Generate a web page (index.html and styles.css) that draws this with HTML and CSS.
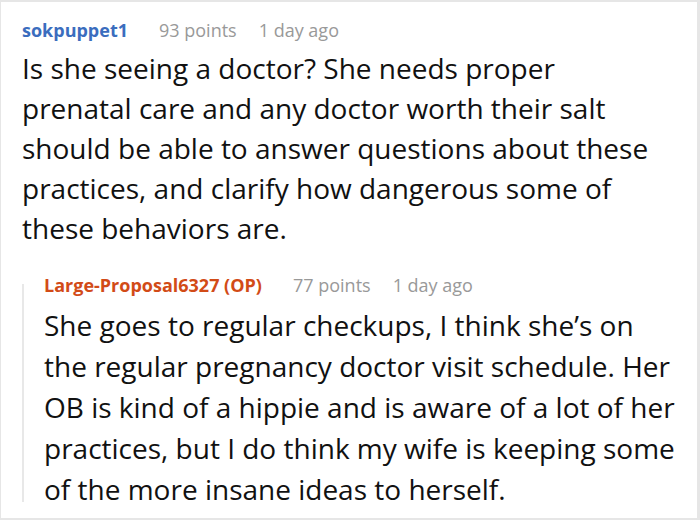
FILE: index.html
```html
<!DOCTYPE html>
<html>
<head>
<meta charset="utf-8">
<link rel="stylesheet" href="styles.css">
</head>
<body>
<div class="frame">
  <div class="comment">
    <div class="meta">
      <span class="user">sokpuppet1</span>
      <span class="points">93 points</span>
      <span class="time">1 day ago</span>
    </div>
    <p class="body">Is she seeing a doctor? She needs proper prenatal care and any doctor worth their salt should be able to answer questions about these practices, and clarify how dangerous some of these behaviors are.</p>
    <div class="reply">
      <div class="meta">
        <span class="user op">Large-Proposal6327 (OP)</span>
        <span class="points">77 points</span>
        <span class="time">1 day ago</span>
      </div>
      <p class="body narrow">She goes to regular checkups, I think she’s on the&nbsp;regular pregnancy doctor visit schedule. Her OB is kind of a hippie and is aware of a lot of her practices, but I do think my wife is keeping some of the more insane ideas to herself.</p>
    </div>
  </div>
</div>
</body>
</html>
```
FILE: styles.css
```css
html, body {
  margin: 0;
  padding: 0;
  background: #fff;
}
body {
  font-family: "Open Sans", "Noto Sans", sans-serif;
  color: #111;
}
.frame {
  box-sizing: border-box;
  width: 700px;
  height: 520px;
  border: 2px solid #e6e6e6;
  border-left-width: 1px;
  border-right-width: 3px;
  overflow: hidden;
}
.comment {
  padding: 16px 0 0 21px;
}
.meta {
  display: flex;
  font-size: 18px;
  line-height: 24px;
  white-space: nowrap;
}
.user {
  font-weight: 700;
  color: #3b6dbe;
  margin-right: 31px;
}
.user.op {
  color: #d24b17;
}
.points, .time {
  color: #999;
}
.points {
  margin-right: 22px;
}
.body {
  margin: 0;
  padding-top: 6px;
  font-size: 28px;
  line-height: 40px;
  width: 640px;
}
.reply {
  position: relative;
  margin-top: 25px;
  padding-left: 22px;
}
.reply::before {
  content: "";
  position: absolute;
  left: 0;
  top: 11px;
  bottom: 8px;
  width: 2px;
  background: #e8e8e8;
}
.narrow {
  width: 645px;
  padding-top: 8px;
  line-height: 41px;
}
```
